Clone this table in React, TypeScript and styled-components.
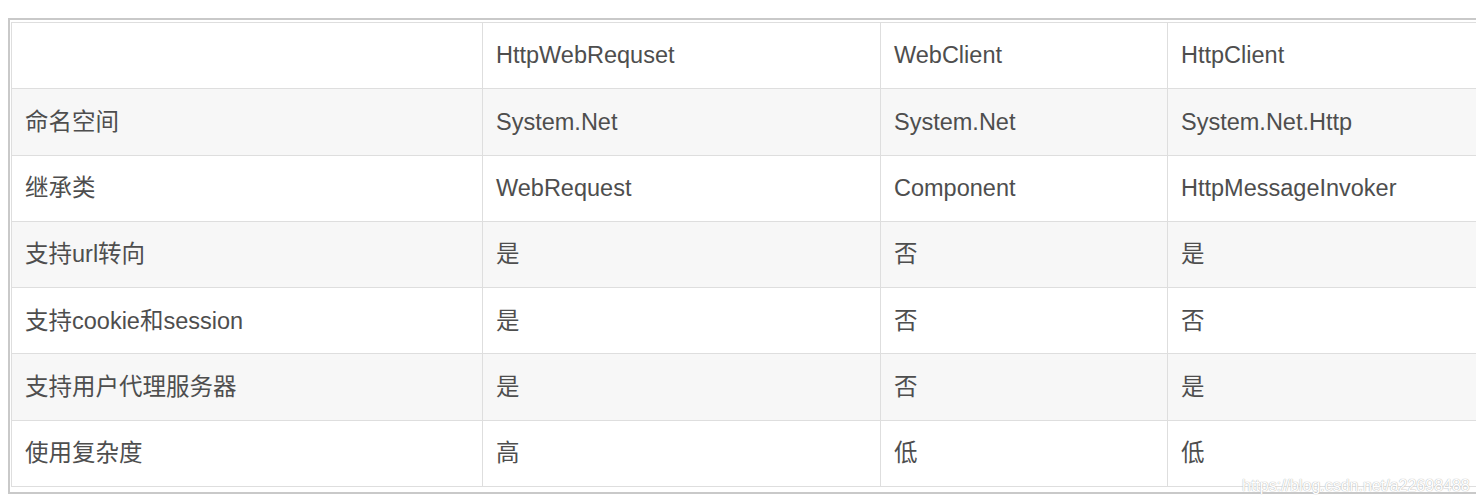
import React from "react";
import styled, { createGlobalStyle } from "styled-components";

const Global = createGlobalStyle`
  html, body {
    margin: 0;
    padding: 0;
    background: #ffffff;
    overflow: hidden;
  }
  body {
    font-family: "Liberation Sans", Arial, "Noto Sans CJK SC", sans-serif;
  }
`;

const Page = styled.div`
  position: relative;
  width: 1476px;
  height: 504px;
  overflow: hidden;
  padding: 18px 0 0 8px;
  box-sizing: border-box;
`;

const Frame = styled.div`
  width: 1560px;
  border: 2px solid #c9c9c9;
  border-right: none;
  padding: 2px 0 5px 1px;
  box-sizing: border-box;
`;

const Table = styled.table`
  border-collapse: collapse;
  table-layout: fixed;
  width: 1540px;
  font-family: "Liberation Sans", Arial, "Noto Sans CJK SC", sans-serif;
  font-size: 23.5px;
  color: #4e4e4e;
`;

const Row = styled.tr<{ $shade: boolean }>`
  background: ${(p) => (p.$shade ? "#f7f7f7" : "#ffffff")};
`;

const Cell = styled.td`
  height: 64.3px;
  padding: 1px 13px 0;
  border: 1px solid #dedede;
  vertical-align: middle;
  white-space: nowrap;
  line-height: 1;
`;

const Watermark = styled.div`
  position: absolute;
  left: 1242px;
  top: 477px;
  font-family: "Liberation Sans", Arial, sans-serif;
  font-size: 16px;
  color: #ffffff;
  text-shadow: 0 0 1px #b8b8b8, 0 0 1px #b8b8b8;
  white-space: nowrap;
`;

const widths = [471, 398, 287, 384];

const header = ["", "HttpWebRequset", "WebClient", "HttpClient"];
const rows: string[][] = [
  ["命名空间", "System.Net", "System.Net", "System.Net.Http"],
  ["继承类", "WebRequest", "Component", "HttpMessageInvoker"],
  ["支持url转向", "是", "否", "是"],
  ["支持cookie和session", "是", "否", "否"],
  ["支持用户代理服务器", "是", "否", "是"],
  ["使用复杂度", "高", "低", "低"],
];

export default function App() {
  const all = [header, ...rows];
  return (
    <Page>
      <Global />
      <Frame>
        <Table>
          <colgroup>
            {widths.map((w, i) => (
              <col key={i} style={{ width: w }} />
            ))}
          </colgroup>
          <tbody>
            {all.map((r, i) => (
              <Row key={i} $shade={i % 2 === 1}>
                {r.map((c, j) => (
                  <Cell key={j}>{c}</Cell>
                ))}
              </Row>
            ))}
          </tbody>
        </Table>
      </Frame>
      <Watermark>https://blog.csdn.net/a22698488</Watermark>
    </Page>
  );
}
